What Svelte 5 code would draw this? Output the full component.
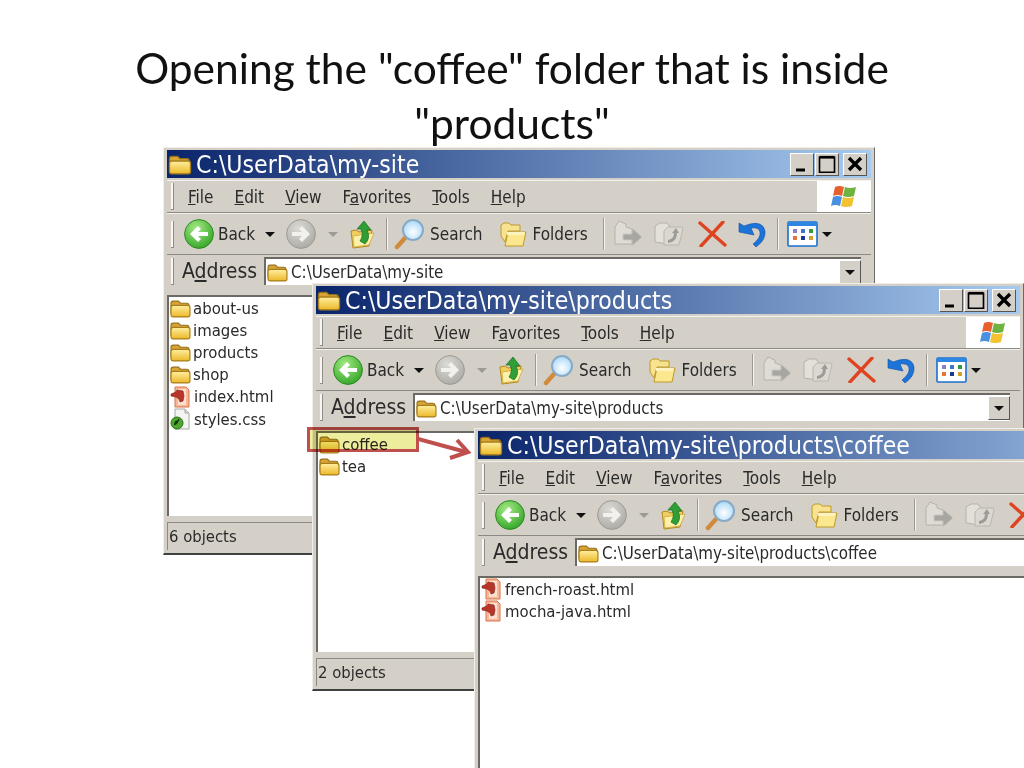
<script>
  const menu = [
    ["", "F", "ile"],
    ["", "E", "dit"],
    ["", "V", "iew"],
    ["F", "a", "vorites"],
    ["", "T", "ools"],
    ["", "H", "elp"],
  ];

  const root = [
    { name: "about-us", type: "folder" },
    { name: "images", type: "folder" },
    { name: "products", type: "folder" },
    { name: "shop", type: "folder" },
    { name: "index.html", type: "html" },
    { name: "styles.css", type: "css" },
  ];
  const products = [
    { name: "coffee", type: "folder" },
    { name: "tea", type: "folder" },
  ];
  const coffee = [
    { name: "french-roast.html", type: "html" },
    { name: "mocha-java.html", type: "html" },
  ];
</script>

{#snippet folder()}
  <svg class="ico-folder" viewBox="0 0 20 18">
    <path d="M1 14V4q0-2 2-2h5l2 2h6q2 0 2 2v3H1z" fill="#d9a433" stroke="#94701c" stroke-width="1.1" />
    <path d="M1 8q0-2 2-2h14q2 0 2 2v7q0 2-2 2H3q-2 0-2-2z" fill="url(#folderFill)" stroke="#a87e1c" stroke-width="1.1" />
  </svg>
{/snippet}

{#snippet html()}
  <svg class="ico-file" viewBox="0 0 22 22">
    <path d="M5 1h11l3 3v17H5z" fill="#f8b898" stroke="#d9734e" />
    <path d="M8 3h8v16H8z" fill="#fbe0d0" />
    <path d="M1 8l5-2 1-2 6 1 1 5-1 5-3 1-1-3-3-2-5-1z" fill="#b8352a" stroke="#7c1f18" stroke-width=".6" />
  </svg>
{/snippet}

{#snippet css()}
  <svg class="ico-file" viewBox="0 0 22 22">
    <path d="M5 1h10l4 4v16H5z" fill="#f4f4f2" stroke="#a8a8a8" />
    <path d="M15 1v4h4" fill="#d8d8d8" stroke="#a8a8a8" />
    <circle cx="7" cy="15" r="6" fill="#4fa82e" stroke="#2b7418" />
    <path d="M4 17q3-1 4-4l1-2M8 13q-3 0-3 3" fill="none" stroke="#10300a" stroke-width="1.3" />
  </svg>
{/snippet}

{#snippet orb(kind)}
  <svg class="orb" viewBox="0 0 30 30">
    <circle cx="15" cy="15" r="14.4" fill={kind === "back" ? "url(#greenOrb)" : "url(#grayOrb)"} stroke={kind === "back" ? "#2e8a22" : "#9b9a95"} />
    {#if kind === "back"}
      <path d="M6 15l8-8 3 3-3 3h10v4H14l3 3-3 3z" fill="#fff" />
    {:else}
      <path d="M24 15l-8-8-3 3 3 3H6v4h10l-3 3 3 3z" fill="#f2f1ed" />
    {/if}
  </svg>
{/snippet}

{#snippet upIcon()}
  <svg class="up" viewBox="0 0 26 30">
    <path d="M1 12l5-1 3 2 13-2-3 16-16 2z" fill="#f0cf60" stroke="#b08a20" />
    <path d="M3 17l21-3-5 12-15 2z" fill="#fdf0a8" stroke="#c8a030" stroke-width=".7" />
    <path d="M15 25q6-6 2-14h4L14 2 7 10h4q3 6-1 12z" fill="#2f9e35" stroke="#1a6e22" stroke-width=".7" />
  </svg>
{/snippet}

{#snippet searchIcon()}
  <svg class="search" viewBox="0 0 31 32">
    <path d="M3 29L11 20" stroke="#d08a3c" stroke-width="4.4" stroke-linecap="round" />
    <circle cx="19" cy="12" r="10" fill="url(#lens)" stroke="#86aac8" stroke-width="2" />
  </svg>
{/snippet}

{#snippet foldersIcon()}
  <svg class="folders" viewBox="0 0 28 28">
    <path d="M1 16V5l3-2h5l2 2h9v6H8L5 22z" fill="#f7e290" stroke="#c09a28" />
    <path d="M8 26l-3 0 3-14h18l-3 14z" fill="#fbe88e" stroke="#c09a28" />
    <path d="M7 12h18l-1 3H7z" fill="#fdf3bf" />
  </svg>
{/snippet}

{#snippet moveIcon()}
  <svg class="move" viewBox="0 0 29 28">
    <path d="M2 24V7l4-6 7 3v3l6 2v15z" fill="#dedcd5" stroke="#b4b2ab" />
    <path d="M10 14h9V8l10 9-10 9v-6h-9z" fill="#a8a6a0" stroke="#c9c7c0" />
  </svg>
{/snippet}

{#snippet copyIcon()}
  <svg class="copy" viewBox="0 0 30 28">
    <path d="M1 22V6l5-3h7l3 4-2 17z" fill="#e2e0d9" stroke="#b4b2ab" />
    <path d="M10 11l4-4h14l1 2-4 16H10z" fill="#dad8d1" stroke="#b8b6af" />
    <path d="M14 20q6-1 6-7h-2l4-5 3 5h-2q0 9-9 10z" fill="#9d9b95" />
  </svg>
{/snippet}

{#snippet deleteIcon()}
  <svg class="del" viewBox="0 0 29 26">
    <path d="M2 2l25 22M25 1L3 25" stroke="#df4420" stroke-width="3.4" fill="none" stroke-linecap="round" />
  </svg>
{/snippet}

{#snippet undoIcon()}
  <svg class="undo" viewBox="0 0 29 27">
    <path d="M12 3q13-3 15 7 1 9-9 16l-3-3q8-6 7-12-1-5-9-4l3 7L1 11l0-9 5 3z" fill="#1c74d8" stroke="#0f4fa8" stroke-width=".6" />
  </svg>
{/snippet}

{#snippet viewsIcon()}
  <svg class="views" viewBox="0 0 31 26">
    <rect x="1" y="1" width="29" height="24" rx="1" fill="#fff" stroke="#1a6fd0" stroke-width="1.6" />
    <rect x="1" y="1" width="29" height="4" fill="#2f86e0" />
    <rect x="6" y="8" width="4" height="4" fill="#8a80c8" />
    <rect x="14" y="8" width="4" height="4" fill="#3a78d0" />
    <rect x="22" y="8" width="4" height="4" fill="#2f9a40" />
    <rect x="6" y="15" width="4" height="4" fill="#e8743a" />
    <rect x="14" y="15" width="4" height="4" fill="#1a3a90" />
    <rect x="22" y="15" width="4" height="4" fill="#d0a030" />
  </svg>
{/snippet}

{#snippet flag()}
  <svg class="flag" viewBox="0 0 26 24">
    <path d="M4 2q4-2 9 0l-2 9q-5-2-9 0z" fill="#e8602c" />
    <path d="M14 2q5 2 11 0l-2 9q-6 2-11 0z" fill="#6cb33f" />
    <path d="M2 12q4-2 9 0l-2 9q-5-2-9 0z" fill="#4a90e0" />
    <path d="M12 12q5 2 11 0l-2 9q-6 2-11 0z" fill="#f2c230" />
  </svg>
{/snippet}

{#snippet win(pos, path, items, status)}
  <section class="win {pos}">
    <header class="title">
      <span class="title-icon">{@render folder()}</span>
      <span class="title-text">{path}</span>
      <span class="caption">
        <span class="cap-btn"><svg viewBox="0 0 12 12"><path d="M2 10h6" stroke="#000" stroke-width="2" /></svg></span>
        <span class="cap-btn"><svg viewBox="0 0 12 12"><path d="M1 1.5h10v10H1z" fill="none" stroke="#000" stroke-width="1.1" /><path d="M1 1.5h10" stroke="#000" stroke-width="1.8" /></svg></span>
        <span class="cap-btn close"><svg viewBox="0 0 12 12"><path d="M2 2l8 8M10 2l-8 8" stroke="#000" stroke-width="2.2" /></svg></span>
      </span>
    </header>

    <nav class="menu">
      <span class="grip"></span>
      <span class="menu-items">
        {#each menu as [pre, key, post]}
          <span>{pre}<u>{key}</u>{post}</span>
        {/each}
      </span>
      <span class="brand">{@render flag()}</span>
    </nav>

    <div class="toolbar">
      <span class="grip"></span>
      <span class="t-back">{@render orb("back")}</span>
      <span class="t-label-back">Back</span>
      <span class="caret t-caret"></span>
      <span class="t-next">{@render orb("next")}</span>
      <span class="caret dim t-caret"></span>
      <span class="t-up">{@render upIcon()}</span>
      <span class="sep t-sep1"></span>
      <span class="t-search">{@render searchIcon()}</span>
      <span class="t-label">Search</span>
      <span class="t-folders">{@render foldersIcon()}</span>
      <span class="t-label">Folders</span>
      <span class="sep t-sep2"></span>
      <span class="t-move">{@render moveIcon()}</span>
      <span class="t-copy">{@render copyIcon()}</span>
      <span class="t-del">{@render deleteIcon()}</span>
      <span class="t-undo">{@render undoIcon()}</span>
      <span class="sep t-sep3"></span>
      <span class="t-views">{@render viewsIcon()}</span>
      <span class="caret t-caret-views"></span>
    </div>

    <div class="address">
      <span class="grip"></span>
      <span class="addr-label">A<u>d</u>dress</span>
      <div class="field">
        {@render folder()}
        <span class="field-text">{path}</span>
        <span class="drop"><span class="caret"></span></span>
      </div>
    </div>

    <ul class="files">
      {#each items as item}
        <li>
          {#if item.type === "folder"}
            {@render folder()}
          {:else if item.type === "html"}
            {@render html()}
          {:else}
            {@render css()}
          {/if}
          <span>{item.name}</span>
        </li>
      {/each}
    </ul>

    <footer class="status">{status}</footer>
  </section>
{/snippet}

<div class="slide">
  <svg class="defs" width="0" height="0">
    <defs>
      <linearGradient id="folderFill" x1="0" y1="0" x2="0" y2="1">
        <stop offset="0" stop-color="#ffefa0" />
        <stop offset="1" stop-color="#ecb828" />
      </linearGradient>
      <radialGradient id="greenOrb" cx=".4" cy=".3" r=".8">
        <stop offset="0" stop-color="#a5ea84" />
        <stop offset="1" stop-color="#2a9f20" />
      </radialGradient>
      <radialGradient id="grayOrb" cx=".4" cy=".3" r=".8">
        <stop offset="0" stop-color="#dcdad4" />
        <stop offset="1" stop-color="#a8a6a1" />
      </radialGradient>
      <radialGradient id="lens" cx=".5" cy=".6" r=".6">
        <stop offset="0" stop-color="#ffffff" />
        <stop offset="1" stop-color="#a8d8f8" />
      </radialGradient>
    </defs>
  </svg>

  <h1>Opening the "coffee" folder that is inside "products"</h1>

  {@render win("w1", "C:\\UserData\\my-site", root, "6 objects")}
  {@render win("w2", "C:\\UserData\\my-site\\products", products, "2 objects")}

  <div class="callout"></div>
  <svg class="arrow" viewBox="0 0 60 30">
    <path d="M0 2L48 15" stroke="#c0504d" stroke-width="4" fill="none" />
    <path d="M32 21L50 15 39 3" stroke="#c0504d" stroke-width="4" fill="none" />
  </svg>

  {@render win("w3", "C:\\UserData\\my-site\\products\\coffee", coffee, "")}
</div>

<style>
  :global(body) {
    margin: 0;
    background: #fff;
  }

  .slide {
    position: relative;
    width: 1024px;
    height: 768px;
    overflow: hidden;
    background: #fff;
  }

  .defs {
    position: absolute;
  }

  h1 {
    width: 800px;
    margin: 0 auto;
    padding-top: 40px;
    font: 400 42.5px/55px Lato, "Open Sans", sans-serif;
    color: #111;
    text-align: center;
  }

  .win {
    position: absolute;
    width: 712px;
    height: 408px;
    box-sizing: border-box;
    display: flex;
    flex-direction: column;
    padding: 2px 3px 3px 3px;
    background: #d4d0c8;
    border: 1px solid #efeee9;
    border-right-color: #6a6a6a;
    border-bottom: 2px solid #404040;
    font-family: "DejaVu Sans Condensed", "DejaVu Sans", sans-serif;
    color: #2a2a2a;
    font-size: 17px;
    filter: blur(0.35px);
  }

  .w1 { left: 163px; top: 147px; }
  .w2 { left: 312px; top: 283px; }
  .w3 { left: 474px; top: 428px; }

  .title {
    height: 28px;
    flex: none;
    display: flex;
    align-items: center;
    background: linear-gradient(90deg, #0a246a, #a6caf0);
    color: #fff;
    font-size: 24.6px;
  }

  .title-icon {
    display: flex;
    margin: 0 4px 0 1px;
  }

  .title-icon :global(svg) {
    width: 24px;
    height: 21px;
  }

  .title-text {
    flex: 1;
    white-space: nowrap;
  }

  .caption {
    display: flex;
    gap: 1px;
    margin-right: 4px;
  }

  .cap-btn {
    width: 22px;
    height: 21px;
    display: flex;
    align-items: center;
    justify-content: center;
    background: #d4d0c8;
    border: 1px solid;
    border-color: #fff #555 #555 #fff;
  }

  .close {
    margin-left: 3px;
  }

  .cap-btn svg {
    width: 18px;
    height: 18px;
  }

  .menu {
    height: 31px;
    flex: none;
    margin-top: 2px;
    display: flex;
    align-items: center;
    border-top: 1px solid #f2f1ec;
    border-bottom: 1px solid #8c8a84;
  }

  .grip {
    flex: none;
    width: 2px;
    height: 26px;
    margin-left: 4px;
    background: #f7f6f2;
    border-right: 1px solid #8f8d87;
    border-bottom: 1px solid #8f8d87;
  }

  .menu-items {
    flex: 1;
    display: flex;
    gap: 21px;
    margin-left: 14px;
  }

  .brand {
    flex: none;
    width: 54px;
    height: 31px;
    display: flex;
    align-items: center;
    justify-content: center;
    background: #fff;
  }

  .flag {
    width: 26px;
    height: 24px;
  }

  .toolbar {
    height: 40px;
    flex: none;
    display: flex;
    align-items: center;
    border-top: 1px solid #f2f1ec;
    border-bottom: 1px solid #8c8a84;
  }

  .toolbar > span {
    display: flex;
    flex: none;
  }

  .orb { width: 30px; height: 30px; }
  .up { width: 26px; height: 30px; }
  .search { width: 31px; height: 32px; }
  .folders { width: 28px; height: 28px; }
  .move { width: 29px; height: 28px; }
  .copy { width: 30px; height: 28px; }
  .del { width: 29px; height: 26px; }
  .undo { width: 29px; height: 27px; }
  .views { width: 31px; height: 26px; }

  .caret {
    width: 0;
    height: 0;
    border-left: 5px solid transparent;
    border-right: 5px solid transparent;
    border-top: 5px solid #111;
  }

  .caret.dim {
    border-top-color: #9b9a95;
  }

  .sep {
    width: 1px;
    height: 32px;
    background: #9b9992;
    border-right: 1px solid #f4f3ee;
  }

  .t-back { margin-left: 10px; }
  .t-label-back { margin-left: 4px; width: 35px; }
  .t-caret { margin-left: 12px; }
  .t-next { margin-left: 11px; }
  .t-up { margin-left: 12px; }
  .t-sep1 { margin-left: 10px; }
  .t-search { margin-left: 6px; }
  .t-label { margin-left: 5px; }
  .t-folders { margin-left: 17px; }
  .t-sep2 { margin-left: 15px; }
  .t-move { margin-left: 8px; }
  .t-copy { margin-left: 12px; }
  .t-del { margin-left: 14px; }
  .t-undo { margin-left: 11px; }
  .t-sep3 { margin-left: 10px; }
  .t-views { margin-left: 8px; }
  .t-caret-views { margin-left: 4px; }

  .address {
    height: 32px;
    flex: none;
    display: flex;
    align-items: center;
    margin-bottom: 8px;
  }

  .addr-label {
    margin-left: 8px;
    width: 82px;
    font-size: 21px;
    flex: none;
  }

  .field {
    width: 597px;
    height: 28px;
    flex: none;
    box-sizing: border-box;
    display: flex;
    align-items: center;
    background: #fff;
    border-top: 2px solid #6c6a64;
    border-left: 2px solid #6c6a64;
    padding-left: 1px;
    font-size: 16.8px;
  }

  .field-text {
    flex: 1;
    margin-left: 3px;
    white-space: nowrap;
  }

  .drop {
    width: 22px;
    height: 24px;
    display: flex;
    align-items: center;
    justify-content: center;
    background: #d4d0c8;
    border: 1px solid;
    border-color: #fff #555 #555 #fff;
    box-sizing: border-box;
  }

  .ico-folder {
    width: 21px;
    height: 19px;
    flex: none;
  }

  .ico-file {
    width: 22px;
    height: 22px;
    flex: none;
  }

  .files {
    flex: 1;
    margin: 0;
    padding: 0 0 0 1px;
    list-style: none;
    background: #fff;
    border-top: 2px solid #6c6a64;
    border-left: 2px solid #6c6a64;
    font-size: 16.6px;
  }

  .files li {
    height: 22.2px;
    display: flex;
    align-items: center;
    gap: 2px;
  }

  .status {
    height: 27px;
    flex: none;
    margin-top: 6px;
    padding-left: 1px;
    line-height: 27px;
    border-top: 1px solid #8c8a84;
    border-left: 1px solid #8c8a84;
    font-size: 16.5px;
  }

  .callout {
    position: absolute;
    left: 307px;
    top: 427px;
    width: 112px;
    height: 25px;
    box-sizing: border-box;
    border: 3px solid #c0504d;
    background: #eded9e;
    mix-blend-mode: multiply;
  }

  .arrow {
    position: absolute;
    left: 418px;
    top: 437px;
    width: 60px;
    height: 30px;
  }
</style>
